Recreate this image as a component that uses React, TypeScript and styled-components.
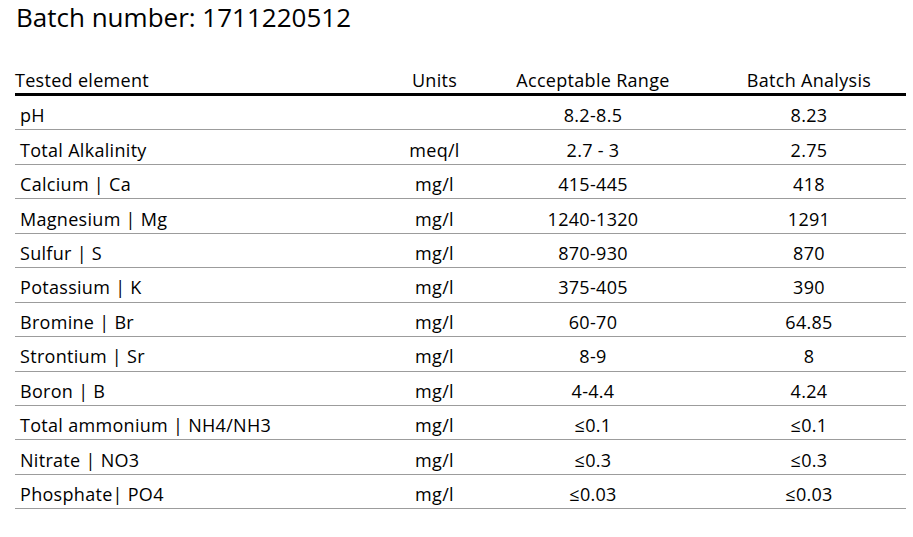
import React from "react";
import styled, { createGlobalStyle } from "styled-components";

type TRow = {
  element: string;
  units: string;
  range: string;
  result: string;
};

const rows: TRow[] = [
  { element: "pH", units: "", range: "8.2-8.5", result: "8.23" },
  { element: "Total Alkalinity", units: "meq/l", range: "2.7 - 3", result: "2.75" },
  { element: "Calcium | Ca", units: "mg/l", range: "415-445", result: "418" },
  { element: "Magnesium | Mg", units: "mg/l", range: "1240-1320", result: "1291" },
  { element: "Sulfur | S", units: "mg/l", range: "870-930", result: "870" },
  { element: "Potassium | K", units: "mg/l", range: "375-405", result: "390" },
  { element: "Bromine | Br", units: "mg/l", range: "60-70", result: "64.85" },
  { element: "Strontium | Sr", units: "mg/l", range: "8-9", result: "8" },
  { element: "Boron | B", units: "mg/l", range: "4-4.4", result: "4.24" },
  { element: "Total ammonium | NH4/NH3", units: "mg/l", range: "≤0.1", result: "≤0.1" },
  { element: "Nitrate | NO3", units: "mg/l", range: "≤0.3", result: "≤0.3" },
  { element: "Phosphate| PO4", units: "mg/l", range: "≤0.03", result: "≤0.03" },
];

export default function App() {
  return (
    <>
      <GlobalStyle />
      <Page>
        <Title>Batch number: 1711220512</Title>
        <Table>
          <HeadRow>
            <Cell>Tested element</Cell>
            <Cell center>Units</Cell>
            <Cell center>Acceptable Range</Cell>
            <Cell center>Batch Analysis</Cell>
          </HeadRow>
          {rows.map((row) => (
            <Row key={row.element}>
              <Cell indent>{row.element}</Cell>
              <Cell center>{row.units}</Cell>
              <Cell center>{row.range}</Cell>
              <Cell center>{row.result}</Cell>
            </Row>
          ))}
        </Table>
      </Page>
    </>
  );
}

const GlobalStyle = createGlobalStyle`
  html, body {
    margin: 0;
    background: #fff;
  }
`;

const Page = styled.div`
  padding: 0 7px 0 15px;
  font-family: "Open Sans", "Noto Sans", sans-serif;
  color: #000;
`;

const Title = styled.h1`
  margin: 0;
  padding-left: 1px;
  height: 36px;
  font-size: 26px;
  font-weight: 400;
  line-height: 34px;
`;

const Table = styled.div`
  width: 891px;
  margin-top: 24px;
  font-size: 18px;
  letter-spacing: 0.3px;
`;

const HeadRow = styled.div`
  display: grid;
  grid-template-columns: 380px 79px 238px 194px;
  align-items: end;
  height: 36px;
  padding-bottom: 1px;
  box-sizing: border-box;
  border-bottom: 3px solid #000;
`;

const Row = styled.div`
  display: grid;
  grid-template-columns: 380px 79px 238px 194px;
  align-items: center;
  height: 34.45px;
  padding-top: 5px;
  box-sizing: border-box;
  border-bottom: 1px solid #9c9c9c;
`;

const Cell = styled.div<{ center?: boolean; indent?: boolean }>`
  text-align: ${({ center }) => (center ? "center" : "left")};
  padding-left: ${({ indent }) => (indent ? "5px" : "0")};
  white-space: nowrap;
`;
